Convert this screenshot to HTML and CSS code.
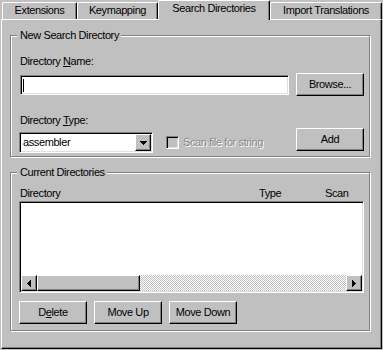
FILE: index.html
```html
<!DOCTYPE html>
<html lang="en">
<head>
    <meta charset="UTF-8">
    <title>Search Directories</title>
    <link rel="stylesheet" href="styles.css">
</head>
<body>
    <div class="dialog">
        <div class="tabs">
            <div class="tab tab-ext">Extensions</div>
            <div class="tab tab-key">Keymapping</div>
            <div class="tab tab-active">Search Directories</div>
            <div class="tab tab-imp">Import Translations</div>
        </div>

        <div class="panel">
            <!-- New directory -->
            <div class="group group-new">
                <span class="group-title">New Search Directory</span>
                <div class="field-label label-name">Directory <u>N</u>ame:</div>
                <div class="row row-name">
                    <div class="textbox"><span class="caret"></span></div>
                    <button class="btn">Browse...</button>
                </div>
                <div class="field-label label-type">Directory <u>T</u>ype:</div>
                <div class="row row-type">
                    <div class="combo">
                        <span class="combo-value">assembler</span>
                        <span class="combo-btn">
                            <svg width="7" height="4" viewBox="0 0 7 4"><path d="M0 0h7v1H0zM1 1h5v1H1zM2 2h3v1H2zM3 3h1v1H3z" fill="#000"/></svg>
                        </span>
                    </div>
                    <div class="check disabled">
                        <span class="check-box"></span>
                        <span class="check-text">Scan file for string</span>
                    </div>
                    <button class="btn">Add</button>
                </div>
            </div>

            <!-- Current directories -->
            <div class="group group-current">
                <span class="group-title">Current Directories</span>
                <div class="columns">
                    <span>Directory</span>
                    <span>Type</span>
                    <span>Scan</span>
                </div>
                <div class="list">
                    <div class="list-body"></div>
                    <div class="hscroll">
                        <span class="sb-btn">
                            <svg width="4" height="7" viewBox="0 0 4 7"><path d="M0 3h1v1H0zM1 2h1v3H1zM2 1h1v5H2zM3 0h1v7H3z" fill="#000"/></svg>
                        </span>
                        <span class="sb-thumb"></span>
                        <span class="sb-track"></span>
                        <span class="sb-btn">
                            <svg width="4" height="7" viewBox="0 0 4 7"><path d="M3 3h1v1H3zM2 2h1v3H2zM1 1h1v5H1zM0 0h1v7H0z" fill="#000"/></svg>
                        </span>
                    </div>
                </div>
                <div class="button-row">
                    <button class="btn">D<u>e</u>lete</button>
                    <button class="btn">Move Up</button>
                    <button class="btn">Move Down</button>
                </div>
            </div>
        </div>
    </div>
</body>
</html>
```

FILE: styles.css
```css
/* Reset */
* {
    margin: 0;
    padding: 0;
    box-sizing: border-box;
}

body {
    background: #c0c0c0;
    font-family: "Liberation Sans", Arial, sans-serif;
    font-size: 11px;
    line-height: 13px;
    letter-spacing: -0.4px;
    color: #000;
}

.dialog {
    width: 383px;
    height: 350px;
}

/* Tabs */
.tabs {
    display: flex;
    align-items: flex-end;
    height: 19px;
    padding-left: 2px;
}

.tab {
    height: 17px;
    padding-top: 1px;
    text-align: center;
    white-space: nowrap;
    border: 1px solid #fff;
    border-right-color: #000;
    border-bottom: none;
    border-radius: 2px 2px 0 0;
    box-shadow: inset -1px 0 #808080;
}

.tab-ext { width: 75px; }
.tab-key { width: 81px; }
.tab-imp { width: 112px; }

.tab-active {
    width: 112px;
    height: 20px;
    margin-bottom: -1px;
    background: #c0c0c0;
    position: relative;
    z-index: 2;
}

/* Page */
.panel {
    width: 381px;
    height: 330px;
    margin-left: 1px;
    padding: 15px 0 0 8px;
    border: 1px solid;
    border-color: #fff #000 #000 #fff;
    box-shadow: inset -1px -1px #808080;
}

.group {
    width: 360px;
    display: flex;
    flex-direction: column;
    padding: 0 5px 0 9px;
    border: 1px solid #808080;
    box-shadow: inset 1px 1px #fff, 1px 1px #fff;
}

.group-title {
    align-self: flex-start;
    margin: -7px 0 0 -3px;
    padding: 0 2px 0 3px;
    background: #c0c0c0;
}

.group-new {
    height: 122px;
}

.group-current {
    height: 159px;
    margin-top: 15px;
}

.label-name { margin-top: 13px; }
.label-type { margin-top: 18px; }

.row {
    display: flex;
    align-items: flex-start;
}

.row-name { margin-top: 5px; }
.row-type { margin-top: 1px; }

/* Sunken fields */
.textbox,
.combo,
.list,
.check-box {
    border: 1px solid;
    border-color: #808080 #fff #fff #808080;
    box-shadow: inset 1px 1px #000, inset -1px -1px #dfdfdf;
}

.textbox {
    width: 269px;
    height: 20px;
    margin-top: 2px;
    padding: 3px 0 0 2px;
    background: #fff;
}

.caret {
    display: block;
    width: 1px;
    height: 13px;
    background: #000;
}

.combo {
    width: 134px;
    height: 21px;
    margin: 4px 0 0 -1px;
    padding: 1px;
    display: flex;
    background: #fff;
}

.combo-value {
    flex: 1;
    padding: 2px 0 0 2px;
}

.combo-btn,
.sb-btn,
.sb-thumb,
.btn {
    background: #c0c0c0;
    border: 1px solid;
    border-color: #fff #000 #000 #fff;
    box-shadow: inset -1px -1px #808080;
}

.combo-btn {
    width: 16px;
    height: 17px;
    display: flex;
    align-items: center;
    justify-content: center;
}

.check {
    display: flex;
    align-items: center;
    margin: 8px 0 0 13px;
}

.check-box {
    width: 13px;
    height: 13px;
    background: #c0c0c0;
}

.check-text {
    margin-left: 4px;
}

.disabled .check-text {
    color: #8a8a8a;
    text-shadow: 1px 1px 0 #fff;
}

/* Buttons */
.btn {
    width: 68px;
    height: 23px;
    font: inherit;
    letter-spacing: inherit;
    color: #000;
    text-align: center;
}

.row .btn {
    margin-left: auto;
}

.button-row {
    display: flex;
    gap: 7px;
    margin: 8px 0 0 -1px;
}

/* List */
.columns {
    display: grid;
    grid-template-columns: 239px 66px auto;
    margin-top: 8px;
}

.list {
    width: 345px;
    height: 92px;
    margin: 1px 0 0 -1px;
    padding: 1px;
    display: flex;
    flex-direction: column;
    background: #fff;
}

.list-body {
    flex: 1;
}

.hscroll {
    display: flex;
    height: 16px;
}

.sb-btn {
    width: 16px;
    display: flex;
    align-items: center;
    justify-content: center;
}

.sb-thumb {
    width: 103px;
}

.sb-track {
    flex: 1;
    background-image: repeating-conic-gradient(#c0c0c0 0 25%, #fff 0 50%);
    background-size: 2px 2px;
}
```
